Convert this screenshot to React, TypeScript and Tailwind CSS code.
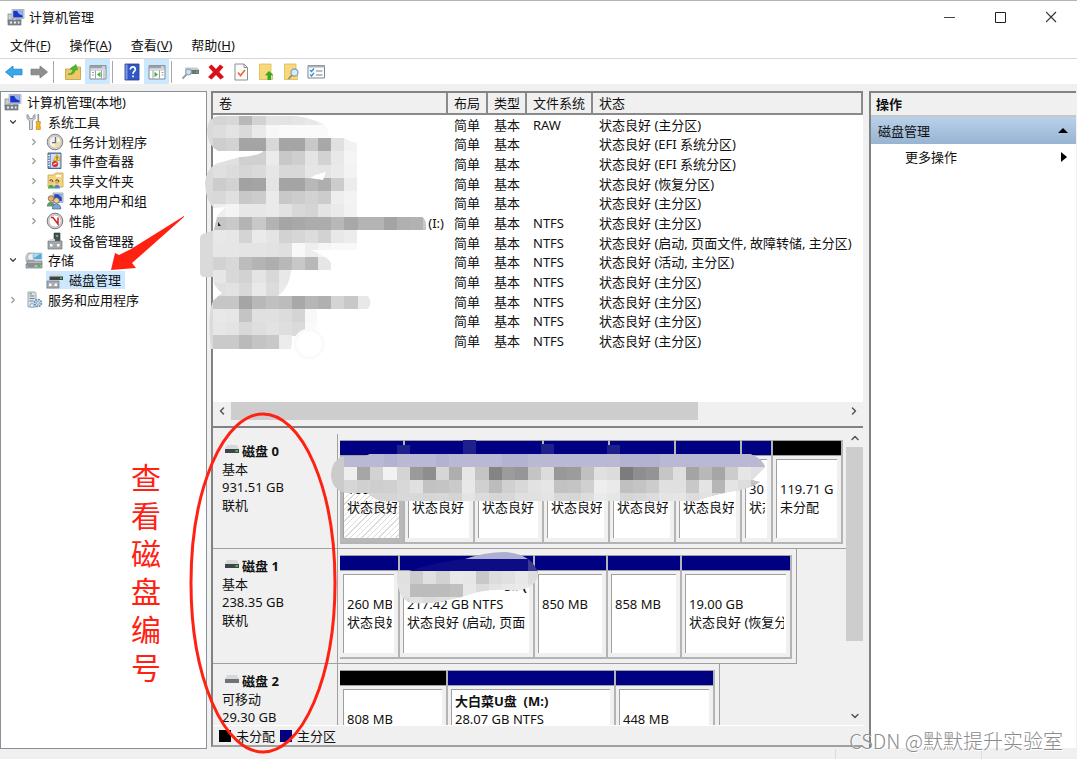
import { Fragment } from 'react';
import type { ReactNode } from 'react';
import { ChevronDown, ChevronLeft, ChevronRight, ChevronUp } from 'lucide-react';

type Partition = {
  width: string;
  name?: string;
  nameRight?: boolean;
  size?: string;
  status?: string;
  free?: boolean;
  selected?: boolean;
};

type Disk = {
  name: string;
  kind: string;
  size: string;
  state?: string;
  removable?: boolean;
  partitions: Partition[];
};

const menus = [
  { label: '文件', key: 'F' },
  { label: '操作', key: 'A' },
  { label: '查看', key: 'V' },
  { label: '帮助', key: 'H' },
];

const volumes = [
  { fs: 'RAW', status: '状态良好 (主分区)' },
  { fs: '', status: '状态良好 (EFI 系统分区)' },
  { fs: '', status: '状态良好 (EFI 系统分区)' },
  { fs: '', status: '状态良好 (恢复分区)' },
  { fs: '', status: '状态良好 (主分区)' },
  { fs: 'NTFS', status: '状态良好 (主分区)', name: '(I:)' },
  { fs: 'NTFS', status: '状态良好 (启动, 页面文件, 故障转储, 主分区)' },
  { fs: 'NTFS', status: '状态良好 (活动, 主分区)' },
  { fs: 'NTFS', status: '状态良好 (主分区)' },
  { fs: 'NTFS', status: '状态良好 (主分区)' },
  { fs: 'NTFS', status: '状态良好 (主分区)' },
  { fs: 'NTFS', status: '状态良好 (主分区)' },
];

const disks: Disk[] = [
  {
    name: '磁盘 0',
    kind: '基本',
    size: '931.51 GB',
    state: '联机',
    partitions: [
      { width: 'w-[65px]', size: '100 MB', status: '状态良好', selected: true },
      { width: 'w-[70px]', status: '状态良好' },
      { width: 'w-[69px]', status: '状态良好' },
      { width: 'w-[66px]', status: '状态良好' },
      { width: 'w-[66px]', status: '状态良好' },
      { width: 'w-[66px]', status: '状态良好' },
      { width: 'w-[31px]', size: '30', status: '状态' },
      { width: 'w-[70px]', size: '119.71 G', status: '未分配', free: true },
    ],
  },
  {
    name: '磁盘 1',
    kind: '基本',
    size: '238.35 GB',
    state: '联机',
    partitions: [
      { width: 'w-[60px]', size: '260 MB', status: '状态良好' },
      { width: 'w-[135px]', name: '55 (', nameRight: true, size: '217.42 GB NTFS', status: '状态良好 (启动, 页面' },
      { width: 'w-[73px]', size: '850 MB' },
      { width: 'w-[74px]', size: '858 MB' },
      { width: 'w-[110px]', size: '19.00 GB', status: '状态良好 (恢复分' },
    ],
  },
  {
    name: '磁盘 2',
    kind: '可移动',
    size: '29.30 GB',
    removable: true,
    partitions: [
      { width: 'w-[108px]', size: '808 MB', free: true },
      { width: 'w-[168px]', name: '大白菜U盘  (M:)', size: '28.07 GB NTFS' },
      { width: 'w-[99px]', size: '448 MB' },
    ],
  },
];

function Icon({ children, size = 18 }: { children: ReactNode; size?: number }) {
  return (
    <svg width={size} height={size} viewBox="0 0 18 18" className="shrink-0" aria-hidden="true">
      {children}
    </svg>
  );
}

function ComputerIcon() {
  return (
    <Icon>
      <rect x="1" y="6" width="5" height="7" fill="#c9ced4" stroke="#7b838c" strokeWidth=".7" />
      <path d="M5 1.5h12v9H5z" fill="#d9dde2" stroke="#9aa1aa" strokeWidth=".7" />
      <path d="M6.2 2.7h9.6v6.8H6.2z" fill="#1b35c9" />
      <path d="M10 2.7h5.8v5L12 6z" fill="#8fb2f2" />
      <path d="M9 10.5h5l1 2H8z" fill="#b5bac1" />
      <path d="M1 12h13v5H1z" fill="#808890" stroke="#5d646c" strokeWidth=".6" />
      <path d="M3 13.5h2v2H3zM7 13.5h2v2H7zM11 13.5h1.5v2H11z" fill="#e8ecef" />
    </Icon>
  );
}

function ToolsIcon() {
  return (
    <Icon>
      <path d="M2 1.5v4L4.5 8v8.5h3V8L10 5.5v-4L8 3v2.5H4V3z" fill="#d3d6d9" stroke="#7f868d" strokeWidth=".8" />
      <path d="M12.5 1h1.6v7.5h-1.6z" fill="#8f969c" />
      <path d="M11.3 8.5h4V11l-.8 1 .8 1v3.5h-4V13l.8-1-.8-1z" fill="#f5b61d" stroke="#b97b0a" strokeWidth=".6" />
    </Icon>
  );
}

function ClockIcon() {
  return (
    <Icon>
      <circle cx="9" cy="9" r="7.800" fill="#d0d0d0" stroke="#858585" />
      <circle cx="9" cy="9" r="6" fill="#f7f1e0" stroke="#b3b3b3" strokeWidth=".6" />
      <path d="M9 9h5.6A5.6 5.6 0 0 1 9 14.6z" fill="#f5dca4" />
      <path d="M9.500 4v5.600H6" fill="none" stroke="#5b7396" strokeWidth="1.400" />
    </Icon>
  );
}

function EventIcon() {
  return (
    <Icon>
      <path d="M2 1h13v15.5H2z" fill="#7d9bcb" stroke="#3f5a8f" strokeWidth=".9" />
      <path d="M5 2h9.3v13.5H5z" fill="#cfdcf1" />
      <path d="M2 3.5h2M2 6h2M2 8.500h2M2 11h2M2 13.500h2" stroke="#e9eef7" />
      <path d="M11 2.500l3.800 6H7.300z" fill="#ffd83a" stroke="#b58b00" strokeWidth=".6" />
      <path d="M11 4.500v2.200M11 7.200v.7" stroke="#222" strokeWidth=".9" />
      <circle cx="9" cy="12" r="3" fill="#dc2a2a" />
      <path d="M7.500 12.500l3-1.500" stroke="#fff" strokeWidth="1.100" />
    </Icon>
  );
}

function SharedFolderIcon() {
  return (
    <Icon>
      <path d="M2 3h6l1.500-2H17v14H2z" fill="#f3d67f" stroke="#c9a24a" strokeWidth=".8" />
      <path d="M10 3h5v2h-5z" fill="#fff" />
      <circle cx="5" cy="10" r="2" fill="#e3c08c" />
      <circle cx="11" cy="10" r="2" fill="#d9ac72" />
      <path d="M2 16.500c0-5 6-5 6 0z" fill="#4aa955" />
      <path d="M8 16.500c0-5 6-5 6 0z" fill="#4a8ac4" />
      <path d="M3.500 9c1-2 3.500-1.500 3.300 1M9.500 9c1-2 3.500-1.500 3.300 1" fill="none" stroke="#4a3316" />
    </Icon>
  );
}

function UsersIcon() {
  return (
    <Icon>
      <path d="M7 1h10v9.500H7z" fill="#d5dae0" stroke="#8b939c" strokeWidth=".7" />
      <path d="M8.200 2.200h7.600v7H8.200z" fill="#2244cc" />
      <path d="M12 2.200h3.800v3.500z" fill="#97b7f5" />
      <circle cx="5" cy="6.500" r="2.800" fill="#dcb27c" stroke="#8a6030" strokeWidth=".8" />
      <path d="M.8 14.500c0-6.500 8.200-6.500 8.200 0z" fill="#5e9c70" />
      <circle cx="10.500" cy="8.500" r="2.800" fill="#ecd0a0" stroke="#86602c" strokeWidth=".8" />
      <path d="M6.300 17c0-7 8.600-7 8.600 0z" fill="#7ba5da" stroke="#345b91" strokeWidth=".6" />
    </Icon>
  );
}

function PerformanceIcon() {
  return (
    <Icon>
      <circle cx="9" cy="9" r="7.800" fill="#d8d8d8" stroke="#777" />
      <circle cx="9" cy="9" r="6" fill="#fff" stroke="#aaa" strokeWidth=".7" />
      <path d="M5 5.500h2l5 6.500V5.500" fill="none" stroke="#d0212c" strokeWidth="1.500" />
    </Icon>
  );
}

function DeviceIcon() {
  return (
    <Icon>
      <path d="M8 1h6v8H8z" fill="#4b5054" stroke="#2d3033" strokeWidth=".6" />
      <path d="M10 3h2v2h-2z" fill="#59c24b" />
      <path d="M2 9h14v8H2z" fill="#a3a8ac" stroke="#6f7478" strokeWidth=".7" />
      <path d="M2 9l2-2h5v2z" fill="#d4d7da" />
      <path d="M4 12h2.500v2.500H4zM11 12h2.500v2.500H11z" fill="#fff" />
    </Icon>
  );
}

function StorageIcon() {
  return (
    <Icon>
      <path d="M1 5.500L3 2h6v8H1z" fill="#d8dbde" stroke="#8d9398" strokeWidth=".7" />
      <circle cx="6" cy="6" r="3.500" fill="#eef1f3" stroke="#9ca3a8" strokeWidth=".7" />
      <path d="M8 2h9v6.500H8z" fill="#4faadb" stroke="#d0d5d9" />
      <path d="M9 3h6L9 7z" fill="#a7dbf4" />
      <path d="M2 10h15v3H2zM1 13h16v4H1z" fill="#b5babe" stroke="#6c7277" strokeWidth=".7" />
      <path d="M12.500 14h3v2h-3z" fill="#3bc13b" />
      <path d="M2.500 15h7" stroke="#5b6165" />
    </Icon>
  );
}

function DiskMgmtIcon() {
  return (
    <Icon>
      <path d="M5 3h10.500l1.500 3H3.500z" fill="#d7dadd" />
      <path d="M3.500 5.500H17V9H3.500z" fill="#3f4448" />
      <path d="M14 6.500h2V8h-2z" fill="#42cf42" />
      <path d="M1 10h12v7H1z" fill="#a7abae" stroke="#74797d" strokeWidth=".7" />
      <path d="M3 12.500h2.500V15H3zM8.500 12.500H11V15H8.500z" fill="#fff" />
    </Icon>
  );
}

function ServicesIcon() {
  return (
    <Icon>
      <path d="M3 1h7l1 1.500V16H3z" fill="#dde3e9" stroke="#8b96a1" strokeWidth=".8" />
      <path d="M4.500 5h5M4.500 7.500h5M4.500 10h4" stroke="#72808e" />
      <path d="M4.500 2.800H7" stroke="#3da53d" />
      <circle cx="13" cy="12" r="3.400" fill="#dce9f5" stroke="#6590b8" strokeWidth="1.800" strokeDasharray="1.800 .8" />
      <circle cx="13" cy="12" r="1.400" fill="#fff" stroke="#6590b8" strokeWidth=".8" />
      <circle cx="7" cy="14.500" r="2" fill="#e6eef5" stroke="#88a8c6" />
    </Icon>
  );
}

function DriveIcon({ removable }: { removable?: boolean }) {
  return (
    <svg width="14" height="9" viewBox="0 0 14 9" className="mb-1 shrink-0" aria-hidden="true">
      <path d="M2 0h10l2 4H0z" fill="#d6d9dc" />
      <path d="M0 4h14v4H0z" fill={removable ? '#6f7376' : '#3e4549'} />
      {!removable && <path d="M10.500 5h2.300v2h-2.300z" fill="#35cf35" />}
    </svg>
  );
}

const tree = [
  { level: 0, label: '计算机管理(本地)', icon: <ComputerIcon /> },
  { level: 1, label: '系统工具', icon: <ToolsIcon />, open: true },
  { level: 2, label: '任务计划程序', icon: <ClockIcon />, open: false },
  { level: 2, label: '事件查看器', icon: <EventIcon />, open: false },
  { level: 2, label: '共享文件夹', icon: <SharedFolderIcon />, open: false },
  { level: 2, label: '本地用户和组', icon: <UsersIcon />, open: false },
  { level: 2, label: '性能', icon: <PerformanceIcon />, open: false },
  { level: 2, label: '设备管理器', icon: <DeviceIcon /> },
  { level: 1, label: '存储', icon: <StorageIcon />, open: true },
  { level: 2, label: '磁盘管理', icon: <DiskMgmtIcon />, selected: true },
  { level: 1, label: '服务和应用程序', icon: <ServicesIcon />, open: false },
];

const indents = ['pl-[3px]', 'pl-[5px]', 'pl-[26px]'];

const toolbar: { title: string; icon: ReactNode; active?: boolean; sep?: boolean }[] = [
  { title: '后退', icon: <path d="M.500 9l7.500-6v3.200h9v5.600H8V15z" fill="#36a9ec" stroke="#1f80c0" strokeWidth=".8" /> },
  { title: '前进', icon: <path d="M17.500 9L10 3v3.200H1v5.600h9V15z" fill="#8f8f8f" stroke="#767676" strokeWidth=".8" />, sep: true },
  {
    title: '向上',
    icon: (
      <>
        <path d="M1.500 6h5L8 4h8.500v12.500h-15z" fill="#edc869" stroke="#c59c3c" strokeWidth=".8" />
        <path d="M4 11c3.500 0 4.500-2 5-4.500L6 6l6-4.500 1.500 5.500-2.300-.3C10.700 10 8.500 12.500 4 11z" fill="#43c02e" stroke="#2b8f1d" strokeWidth=".5" />
      </>
    ),
  },
  {
    title: '显示/隐藏控制台树',
    active: true,
    sep: true,
    icon: (
      <>
        <path d="M1 2.500h16v13.500H1z" fill="#fff" stroke="#82898f" />
        <path d="M1 2.500h16v3H1z" fill="#9aa1a8" />
        <path d="M13 4h3" stroke="#fff" />
        <path d="M1.500 7h15" stroke="#b0b5ba" />
        <path d="M6.500 7.500v8M12.500 7.500v8M3 9.500h2M3 12h2M15 8v7.500" stroke="#9aa1a8" />
        <path d="M11.500 8.700v5.600L8 11.500z" fill="#3cb52a" />
      </>
    ),
  },
  {
    title: '帮助',
    icon: (
      <>
        <path d="M2 1h14v16H2z" fill="#3158c4" stroke="#1e3a8a" strokeWidth=".8" />
        <path d="M2.500 1.500h2v15h-2z" fill="#7f9be4" />
        <path d="M7.300 6.500c0-3.500 5-3.300 5 0 0 2-2.300 2-2.300 4.300M10 12.500v1.800" fill="none" stroke="#fff" strokeWidth="1.700" />
      </>
    ),
  },
  {
    title: '显示/隐藏操作窗格',
    active: true,
    sep: true,
    icon: (
      <>
        <path d="M1 2.500h16v13.500H1z" fill="#fff" stroke="#82898f" />
        <path d="M1 2.500h16v3H1z" fill="#9aa1a8" />
        <path d="M13 4h3" stroke="#fff" />
        <path d="M1.500 7h15" stroke="#b0b5ba" />
        <path d="M5 7.500v8M11.500 7.500v8M13.500 9.500h2M13.500 12h2" stroke="#9aa1a8" />
        <path d="M6.500 8.700v5.600l3.500-2.800z" fill="#3cb52a" />
      </>
    ),
  },
  {
    title: '刷新',
    icon: (
      <>
        <path d="M3 5h12l2 2v4H6z" fill="#6d7479" />
        <path d="M3 4.500h12l2 2.500H3z" fill="#c5cacd" />
        <path d="M14 8h2v2h-2z" fill="#36c936" />
        <circle cx="6.500" cy="9" r="3" fill="#c9dfec" stroke="#7f98a8" />
        <path d="M4.500 11.500l-4 4" stroke="#8d979e" strokeWidth="1.800" />
      </>
    ),
  },
  { title: '删除', icon: <path d="M1.500 4l3-2.500L9 6l4-4.500L16.500 4l-4.300 5 4.800 5-3.500 2.500L9 12l-4.500 4.500L1 14l5-5z" fill="#d9101c" /> },
  {
    title: '属性',
    icon: (
      <>
        <path d="M3 1h9l3.500 3.500V17H3z" fill="#fcfcfc" stroke="#8e8e8e" />
        <path d="M12 1v3.500h3.500" fill="none" stroke="#8e8e8e" />
        <path d="M6 9.500l2.500 3L13 7" fill="none" stroke="#ef6f3a" strokeWidth="1.800" />
      </>
    ),
  },
  {
    title: '新建',
    icon: (
      <>
        <path d="M2.500 1H14v9l1.500 1v5.500h-13z" fill="#f8d878" stroke="#dbb95c" strokeWidth=".8" />
        <path d="M12 8l4.300 4.300H14V17h-3.500v-4.700H7.800z" fill="#31a92a" />
      </>
    ),
  },
  {
    title: '查找',
    icon: (
      <>
        <path d="M2.500 1H14v9l1.500 1v5.500h-13z" fill="#f8d878" stroke="#dbb95c" strokeWidth=".8" />
        <circle cx="12.500" cy="9.500" r="3.500" fill="#d6edf9" stroke="#87a6b9" strokeWidth="1.300" />
        <path d="M10 12l-3.500 4" stroke="#96897a" strokeWidth="1.800" />
      </>
    ),
  },
  {
    title: '选项',
    icon: (
      <>
        <path d="M1 2.500h16.500v12.500H1z" fill="#fbfcfd" stroke="#7d858c" />
        <path d="M1 2.500h16.500v2H1z" fill="#aab0b6" />
        <path d="M3 7l1.500 1.500L7 5.500M3 11.500L4.500 13 7 10" fill="none" stroke="#2f89d8" strokeWidth="1.200" />
        <path d="M9 8h6.500M9 12h6.500" stroke="#a3a9ae" strokeWidth="1.300" />
      </>
    ),
  },
];

function DiskRow({ disk }: { disk: Disk }) {
  return (
    <section className="flex h-[115px] shrink-0">
      <div className="w-[125px] shrink-0 border-r border-b border-[#a0a0a0] pt-2 pl-[9px] leading-[18px]">
        <h2 className="flex items-center gap-[3px] pl-[3px] font-bold">
          <DriveIcon removable={disk.removable} />
          {disk.name}
        </h2>
        <p>{disk.kind}</p>
        <p>{disk.size}</p>
        {disk.state && <p>{disk.state}</p>}
      </div>
      <div className="min-w-0 flex-1 overflow-hidden">
        <div className="flex h-full w-max border-r border-b border-[#a0a0a0] pt-1.5 pr-1 pb-1 pl-0.5">
          {disk.partitions.map((p, i) => (
            <div key={i} className={`flex flex-col border-r-2 border-b-2 border-[#b4b4b4] ${p.width}`}>
              <div className={`h-4 border-t border-b border-[#a0a0a0] ${p.free ? 'bg-black' : 'bg-[#000082]'}`} />
              <div className={`flex min-h-0 flex-1 p-1 pt-[3px] pl-[3px] ${p.selected ? 'bg-[#b8b8b8]' : ''}`}>
                <div
                  className={`min-w-0 flex-1 overflow-hidden border-t border-l border-[#a0a0a0] pt-0.5 pr-0.5 pl-[3px] leading-[18px] whitespace-pre ${
                    p.selected
                      ? 'bg-[repeating-linear-gradient(135deg,#fff_0px,#fff_3px,#dcdcdc_3px,#dcdcdc_4px)]'
                      : 'bg-white'
                  }`}
                >
                  <p className={`h-[18px] overflow-hidden font-bold ${p.nameRight ? 'text-right' : ''}`}>{p.name}</p>
                  <p className="h-[18px] overflow-hidden">{p.size}</p>
                  <p className="h-[18px] overflow-hidden">{p.status}</p>
                </div>
              </div>
            </div>
          ))}
        </div>
      </div>
    </section>
  );
}

// Grey levels, one hex pair per block; "--" leaves the block empty
const volumeBlocks = [
  'd5 d8 b8 d2 e3 e3 e5 e8 f0',
  'dd e3 da ea f7 fa fa fa fa f8',
  'ce d2 a4 a4 d8 a5 a5 c8 a8 e0 f2',
  'e2 e0 d0 d0 eb c8 ce e4 d2 e8 f5',
  'e0 dc d6 da e6 d8 d8 e6 e4 ea f3',
  'cc d2 a2 a4 e4 a4 a4 b8 ae cc ec',
  'd8 e0 c8 cc ea c8 cc d2 cc ee f3',
  'ee f4 e7 e7 ea e2 d8 d4 e4 ea f2',
  'c5 c9 b4 c8 b3 a5 a8 ac ac b8 a8 b4 b4 a4 b0 b2 c8',
  'e8 e6 d4 ea e4 d2 d6 dc d2 e8 ec',
  'e6 e6 e4 e4 e2 df f8 ee f5 f8 f8',
  'd2 d8 bc b4 ae b8 c8 b8 e6',
  'e6 d8 d2 e4 d8 e8 f4',
  'e0 e2 d8 e9 dc ea',
  'c6 c6 a5 b8 c0 bc a8 b6 b0 d4 c8 e8',
  'e8 e6 c4 e0 e0 dc d4 f8',
  'e6 e4 d8 de e2 de da fa',
  'ca ca ba c4 c8 ec',
];

const diskBlocks = [
  'ee a6 d2 f2 d4 9a 8e d6 ae e6 c4 84 9c 96 c4 dc 98 9c c0 e0 dc 7c 8e 94 c6 de a4 b8 a6 cc e6 e0',
  'd6 d0 c6 ca d8 e0 c2 c4 ca e8 d0 bc d0 d8 e2 e6 c2 c4 d0 ee ea c0 c4 cc e0 e0 c8 e4 b6 e4 dd c4',
  'd8 d8 d8 d8 d8 d8 d6 d8 d4 e4 dc d6 d8 e0 e0 e4 d8 d6 dc ea e6 d6 d8 dc e4 e6 dc e2 d8 e4 e0 d8',
];

const bootBlocks = ['e0 cc e0 d2 e8 e6 c8 dc e0 e8 dd', 'e2 bc bc bc c0 e8 dc e4 e8 ea e4', 'dc e2 dc e0 e4 e8 e8 e8 e8 e8 e8'];

const STEP = 13.14;

function Blocks({ rows, x, y }: { rows: string[]; x: number; y: number }) {
  return (
    <g shapeRendering="crispEdges">
      {rows.map((row, j) =>
        row.split(' ').map((v, i) =>
          v === '--' ? null : (
            <rect key={`${j}-${i}`} x={x + i * STEP} y={y + j * STEP} width={STEP + 0.3} height={STEP + 0.3} fill={`#${v}${v}${v}`} />
          ),
        ),
      )}
    </g>
  );
}

function Annotations() {
  return (
    <svg width="1077" height="759" viewBox="0 0 1077 759" className="pointer-events-none absolute top-0 left-0" aria-hidden="true">
      <defs>
        <clipPath id="volumes">
          <path d="M218 116H296Q316 119 326 126L330 138H345Q348 141 357 143V217H422Q427 219 426 230H357V250H311Q327 256 331 263V270H291Q290 287 278 296H368Q373 302 368 309H317V329L300 333Q292 336 291 349H211Q207 315 213 301Q219 295 222 293Q212 285 214 277H203Q200 276 200 272V238Q200 234 206 233L214 230L217 217Q219 213 226 207L214 208Q206 202 205 184Q206 168 218 163L240 157Q258 156 264 151H218Q207 145 207 130Q208 118 218 116Z" />
        </clipPath>
        <clipPath id="disk0">
          <path d="M345 456H366L370 454H750Q762 458 765 467L752 480L760 482Q750 489 728 492Q705 497 697 501H385Q374 500 368 493H345Q331 489 331 474Q332 459 345 456Z" />
        </clipPath>
        <clipPath id="disk1">
          <path d="M397 571H409Q440 561 465 559Q485 552 505 552Q532 554 538 573Q538 588 515 591Q490 587 465 596Q435 605 412 603Q396 600 397 571Z" />
        </clipPath>
      </defs>

      <g clipPath="url(#volumes)">
        <path d="M198 112h18v240h-18z" fill="#dadada" />
        <Blocks rows={volumeBlocks} x={213} y={112} />
        <path d="M310 178l5-3 11-3-3 8z" fill="#fff" />
      </g>
      <circle cx="309" cy="344" r="14" fill="none" stroke="#fafafa" strokeWidth="3" />
      <path d="M218 222l3 4h-3z" fill="#222" />

      <path d="M397 445h13v10h-13zM463 440h13v14h-13zM541 444h13v10h-13zM607 445h13v10h-13z" fill="#20208c" />
      <g clipPath="url(#disk0)">
        <path d="M330 450h440v55H330z" fill="#cbcbcb" />
        <path d="M344 454h425v13H344z" fill="#bab9d3" />
        <path d="M384 454h13v13h-13zM436 454h13v13h-13zM502 454h26v13h-26zM620 454h40v13h-40z" fill="#b3b2d0" />
        <Blocks rows={diskBlocks} x={344} y={467} />
        <path d="M368 480h29v21h-29z" fill="#d4d4d4" opacity=".6" />
      </g>

      <g clipPath="url(#disk1)">
        <path d="M400 559h133v12H400z" fill="#0c0c86" />
        <path d="M465 550h75v9h-75z" fill="#aeaed2" />
        <path d="M528 558h12v15h-12z" fill="#3a3a92" />
        <Blocks rows={bootBlocks} x={397} y={571} />
      </g>

      <ellipse cx="263" cy="583" rx="72" ry="169" fill="none" stroke="#ff2213" strokeWidth="3" />
      <path d="M184 216L131 249L119 255L115 253L111 270L136 268L132 263L140 256L184 217Z" fill="#ff2213" />
    </svg>
  );
}

export default function App() {
  return (
    <div className="relative flex h-screen flex-col overflow-hidden bg-[#f0f0f0] font-['Noto_Sans','Noto_Sans_CJK_SC',sans-serif] text-[13px] leading-[18px] text-[#111]">
      {/* Title bar */}
      <header className="flex h-8 shrink-0 items-center border-t border-[#b4b4b4] bg-white pl-[7px]">
        <ComputerIcon />
        <h1 className="ml-1 flex-1">计算机管理</h1>
        <button aria-label="最小化" className="grid h-full w-[51px] place-items-center">
          <svg width="12" height="12" viewBox="0 0 12 12" stroke="#444">
            <path d="M0 6.500h11" />
          </svg>
        </button>
        <button aria-label="最大化" className="grid h-full w-[51px] place-items-center">
          <svg width="12" height="12" viewBox="0 0 12 12" stroke="#222" fill="none">
            <path d="M.500 1.500h10v10h-10z" />
          </svg>
        </button>
        <button aria-label="关闭" className="grid h-full w-[51px] place-items-center">
          <svg width="12" height="12" viewBox="0 0 12 12" stroke="#333" strokeWidth="1.200">
            <path d="M0 1l10 10M10 1L0 11" />
          </svg>
        </button>
      </header>

      <nav className="flex h-[27px] shrink-0 items-center gap-[19px] border-b border-[#d5d7da] bg-white pl-2.5">
        {menus.map((m) => (
          <button key={m.key}>
            {m.label}(<span className="underline">{m.key}</span>)
          </button>
        ))}
      </nav>

      <div className="flex h-[25px] shrink-0 items-center bg-white pl-px">
        {toolbar.map((t) => (
          <Fragment key={t.title}>
            <button title={t.title} className={`grid h-full w-[25px] place-items-center ${t.active ? 'bg-[#cce8ff]' : ''}`}>
              <Icon>{t.icon}</Icon>
            </button>
            {t.sep && <span className="mr-1.5 ml-0.5 h-[22px] w-px bg-[#a8a8a8]" />}
          </Fragment>
        ))}
      </div>

      <main className="flex min-h-0 flex-1 pt-[7px] pr-px">
        {/* Console tree */}
        <aside className="relative w-[207px] shrink-0 border border-[#8a9099] bg-white">
          <ul className="grid h-[218px] auto-rows-fr">
            {tree.map((n) => (
              <li key={n.label} className={`flex items-center gap-[5px] whitespace-nowrap ${indents[n.level]}`}>
                {n.level > 0 && (
                  <span className="grid w-3.5 place-items-center">
                    {n.open === true && <ChevronDown size={10} color="#444" strokeWidth={3} />}
                    {n.open === false && <ChevronRight size={10} color="#999" strokeWidth={3} />}
                  </span>
                )}
                <span className={`flex items-center gap-[5px] ${n.selected ? 'bg-[#cce8ff] pr-1' : ''}`}>
                  {n.icon}
                  {n.label}
                </span>
              </li>
            ))}
          </ul>
          <p className="absolute top-[367px] left-[130px] w-[30px] text-[30px] leading-[38px] break-all text-[#ff2213]">查看磁盘编号</p>
        </aside>

        <div className="ml-1 flex min-w-0 flex-1 flex-col pb-0.5">
          {/* Volume list */}
          <section className="flex h-[337px] shrink-0 flex-col overflow-hidden border-t-2 border-b-2 border-l-2 border-[#828282] bg-white">
            <table className="h-[258px] w-full shrink-0 table-fixed border-separate border-spacing-0 text-left whitespace-nowrap">
              <colgroup>
                <col className="w-[235px]" />
                <col className="w-10" />
                <col className="w-[39px]" />
                <col className="w-[66px]" />
                <col />
              </colgroup>
              <thead>
                <tr className="h-[22px] bg-[#f0f0f0]">
                  {['卷', '布局', '类型', '文件系统', '状态'].map((h) => (
                    <th key={h} className="border-r-2 border-b-2 border-[#8a8a8a] p-0 pl-1.5 font-normal">
                      {h}
                    </th>
                  ))}
                </tr>
              </thead>
              <tbody>
                {volumes.map((v, i) => (
                  <tr key={i}>
                    <td className="p-0 pr-1 text-right">{v.name}</td>
                    <td className="p-0 pl-1.5">简单</td>
                    <td className="p-0 pl-1.5">基本</td>
                    <td className="p-0 pl-1.5">{v.fs}</td>
                    <td className="p-0 pl-1.5">{v.status}</td>
                  </tr>
                ))}
              </tbody>
            </table>
            <div className="mt-auto flex h-[18px] shrink-0 bg-[#f0f0f0]">
              <button aria-label="向左滚动" className="grid w-[18px] place-items-center">
                <ChevronLeft size={12} color="#555" strokeWidth={3} />
              </button>
              <div className="flex-1">
                <div className="h-full w-[76%] bg-[#cdcdcd]" />
              </div>
              <button aria-label="向右滚动" className="grid w-[18px] place-items-center">
                <ChevronRight size={12} color="#555" strokeWidth={3} />
              </button>
            </div>
            <div className="h-1.5 shrink-0 bg-[#f0f0f0]" />
          </section>

          {/* Graphical view */}
          <section className="flex min-h-0 flex-1 flex-col border-b-2 border-l-2 border-[#a0a0a0] border-l-[#828282]">
            <div className="flex min-h-0 flex-1 overflow-hidden">
              <div className="flex min-w-0 flex-1 flex-col overflow-hidden pt-1.5">
                {disks.map((d) => (
                  <DiskRow key={d.name} disk={d} />
                ))}
              </div>
              <div className="flex w-[17px] shrink-0 flex-col">
                <button aria-label="向上滚动" className="grid h-[19px] place-items-center">
                  <ChevronUp size={12} color="#555" strokeWidth={3} />
                </button>
                <div className="flex-1">
                  <div className="h-[75%] bg-[#cdcdcd]" />
                </div>
                <button aria-label="向下滚动" className="grid h-[19px] place-items-center">
                  <ChevronDown size={12} color="#555" strokeWidth={3} />
                </button>
              </div>
            </div>
            <div className="flex h-5 shrink-0 items-center gap-[5px] border-t border-white pl-1.5">
              <span className="size-3 bg-black" />
              <span>未分配</span>
              <span className="size-3 bg-[#000082]" />
              <span>主分区</span>
            </div>
          </section>
        </div>

        {/* Actions */}
        <aside className="mb-px ml-1.5 w-[207px] shrink-0 border-t-2 border-l-2 border-[#828282] bg-white">
          <h2 className="h-6 border-b-2 border-[#c8c8c8] bg-[#f0f0f0] pt-0.5 pl-[5px] font-bold">操作</h2>
          <button className="flex h-[27px] w-full items-center justify-between bg-linear-to-b from-[#b9d1ea] to-[#98b4d2] pr-2 pl-[7px]">
            磁盘管理
            <svg width="10" height="5" viewBox="0 0 10 5">
              <path d="M5 0l5 5H0z" />
            </svg>
          </button>
          <button className="flex h-[26px] w-full items-center justify-between pr-[9px] pl-[34px]">
            更多操作
            <svg width="6" height="10" viewBox="0 0 6 10">
              <path d="M6 5L0 0v10z" />
            </svg>
          </button>
        </aside>
      </main>

      <footer className="flex h-2.5 shrink-0 justify-end">
        <span className="w-[146px] border-l border-[#dcdcdc]" />
        <span className="w-24 border-l border-[#dcdcdc]" />
      </footer>

      <Annotations />
      <p className="absolute right-[14px] bottom-1 font-['Noto_Sans_CJK_SC',sans-serif] text-[20px] leading-7 font-light text-[#8c8c8c] [text-shadow:1px_1px_0_#fff]">
        CSDN @默默提升实验室
      </p>
    </div>
  );
}
